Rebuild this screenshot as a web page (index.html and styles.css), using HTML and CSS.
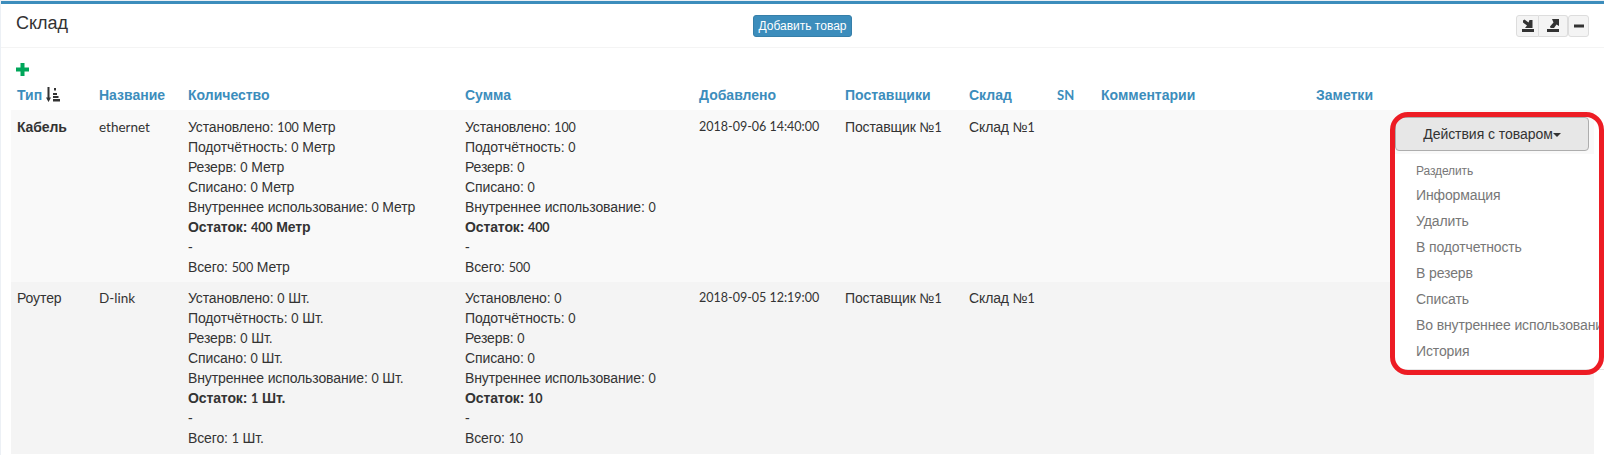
FILE: index.html
```html
<!DOCTYPE html>
<html lang="ru">
<head>
<meta charset="utf-8">
<title>Склад</title>
<link rel="stylesheet" href="styles.css">
</head>
<body>
<section class="box">
  <header class="box-header">
    <h3 class="box-title">Склад</h3>
    <button class="btn-add">Добавить товар</button>
    <div class="tools">
      <button class="tool tool-first"><svg width="14" height="14" viewBox="0 0 14 14"><path d="M1 10h12v3H1z" fill="#333"/><path d="M2 1.500l1.500-1 4 3 1-2.500h3v8H4l2-2.500-4-3z" fill="#333"/></svg></button>
      <button class="tool tool-mid"><svg width="14" height="14" viewBox="0 0 14 14"><path d="M1 10h12v3H1z" fill="#333"/><path d="M6 0h7v7l-2.500-1.500L8 9H4.500L4 7.500 7.500 3.500z" fill="#333"/></svg></button>
      <button class="tool tool-last"><svg width="10" height="10" viewBox="0 0 10 10"><path d="M0 3.500h10v3H0z" fill="#333"/></svg></button>
    </div>
  </header>
  <div class="box-body">
    <div class="plus-row"><svg width="13" height="13" viewBox="0 0 13 13"><path d="M4.500 0h4v4.500H13v4H8.500V13h-4V8.500H0v-4h4.500z" fill="#00a65a"/></svg></div>
    <table class="stock">
      <colgroup>
        <col class="c-type"><col class="c-name"><col class="c-qty"><col class="c-sum"><col class="c-date"><col class="c-sup"><col class="c-wh"><col class="c-sn"><col class="c-com"><col class="c-note"><col class="c-act">
      </colgroup>
      <thead>
        <tr>
          <th>Тип <svg class="sort" width="14" height="15" viewBox="0 0 14 15"><path d="M1.500 0h2v10.500H5L2.500 15 0 10.500h1.500z" fill="#333"/><path d="M8 1h2v2.500H8zM7 6h4v2H7zM7 9h5.500v2H7zM7 12h7v2.500H7z" fill="#333"/></svg></th>
          <th>Название</th><th>Количество</th><th>Сумма</th><th>Добавлено</th><th>Поставщики</th><th>Склад</th><th class="sn">SN</th><th>Комментарии</th><th>Заметки</th><th></th>
        </tr>
      </thead>
      <tbody>
        <tr class="odd">
          <td><b>Кабель</b></td>
          <td class="latin">ethernet</td>
          <td>Установлено: <span class="n">100</span> Метр<br>Подотчётность: <span class="n">0</span> Метр<br>Резерв: <span class="n">0</span> Метр<br>Списано: <span class="n">0</span> Метр<br>Внутреннее использование: <span class="n">0</span> Метр<br><b>Остаток: <span class="n">400</span> Метр</b><br>-<br>Всего: <span class="n">500</span> Метр</td>
          <td>Установлено: <span class="n">100</span><br>Подотчётность: <span class="n">0</span><br>Резерв: <span class="n">0</span><br>Списано: <span class="n">0</span><br>Внутреннее использование: <span class="n">0</span><br><b>Остаток: <span class="n">400</span></b><br>-<br>Всего: <span class="n">500</span></td>
          <td class="date">2018-09-06 14:40:00</td>
          <td>Поставщик №<span class="n">1</span></td>
          <td>Склад №<span class="n">1</span></td>
          <td></td><td></td><td></td>
          <td class="act">
            <div class="act-wrap">
              <button class="btn-act">Действия с товаром<span class="caret"></span></button>
              <ul class="menu">
                <li class="small">Разделить</li>
                <li>Информация</li>
                <li>Удалить</li>
                <li>В подотчетность</li>
                <li>В резерв</li>
                <li>Списать</li>
                <li>Во внутреннее использование</li>
                <li>История</li>
              </ul>
            </div>
          </td>
        </tr>
        <tr class="even">
          <td>Роутер</td>
          <td class="latin">D-link</td>
          <td>Установлено: <span class="n">0</span> Шт.<br>Подотчётность: <span class="n">0</span> Шт.<br>Резерв: <span class="n">0</span> Шт.<br>Списано: <span class="n">0</span> Шт.<br>Внутреннее использование: <span class="n">0</span> Шт.<br><b>Остаток: <span class="n">1</span> Шт.</b><br>-<br>Всего: <span class="n">1</span> Шт.</td>
          <td>Установлено: <span class="n">0</span><br>Подотчётность: <span class="n">0</span><br>Резерв: <span class="n">0</span><br>Списано: <span class="n">0</span><br>Внутреннее использование: <span class="n">0</span><br><b>Остаток: <span class="n">10</span></b><br>-<br>Всего: <span class="n">10</span></td>
          <td class="date">2018-09-05 12:19:00</td>
          <td>Поставщик №<span class="n">1</span></td>
          <td>Склад №<span class="n">1</span></td>
          <td></td><td></td><td></td><td></td>
        </tr>
      </tbody>
    </table>
  </div>
</section>
<div class="annotation"></div>
</body>
</html>
```

FILE: styles.css
```css
html, body {
  margin: 0;
  padding: 0;
  background: #ecf0f5;
  height: 455px;
  overflow: hidden;
}
body {
  font-family: "Liberation Sans", Arial, sans-serif;
  font-size: 14px;
  line-height: 20px;
  color: #333;
}
.box {
  margin: 1px 0 0 1px;
  background: #fff;
  border-top: 3px solid #3c8dbc;
  height: 451px;
  overflow: hidden;
}
.box-header {
  position: relative;
  display: flex;
  align-items: flex-start;
  justify-content: center;
  height: 43px;
  border-bottom: 1px solid #f4f4f4;
}
.box-title {
  position: absolute;
  left: 15px;
  top: 9px;
  margin: 0;
  font-size: 18px;
  font-weight: 400;
  line-height: 20px;
  color: #333;
}
.btn-add {
  margin: 11px 0 0 0;
  height: 22px;
  width: 99px;
  padding: 0;
  font: 12px/18px "Liberation Sans", sans-serif;
  color: #fff;
  background: #3c8dbc;
  border: 1px solid #367fa9;
  border-radius: 3px;
}
.tools {
  position: absolute;
  right: 15px;
  top: 11px;
  display: flex;
}
.tool {
  height: 22px;
  padding: 0;
  display: flex;
  align-items: center;
  justify-content: center;
  background: #f4f4f4;
  border: 1px solid #ddd;
}
.tool-first { width: 23px; border-radius: 3px 0 0 3px; }
.tool-mid { width: 29px; border-left: 0; border-radius: 0 3px 3px 0; }
.tool-last { width: 21px; border-radius: 3px; }
.box-body {
  padding: 15px 10px 0;
}
.plus-row {
  height: 13px;
  padding-left: 5px;
}
.plus-row svg { display: block; }
.stock {
  width: 1583px;
  margin-top: 3px;
  border-collapse: collapse;
  table-layout: fixed;
}
.c-type { width: 82px; }
.c-name { width: 89px; }
.c-qty { width: 277px; }
.c-sum { width: 234px; }
.c-date { width: 146px; }
.c-sup { width: 124px; }
.c-wh { width: 88px; }
.c-sn { width: 44px; }
.c-com { width: 215px; }
.c-note { width: 80px; }
.c-act { width: 204px; }
.stock th {
  padding: 6px 6px 5px;
  text-align: left;
  font-weight: 700;
  color: #3c8dbc;
  line-height: 20px;
  white-space: nowrap;
}
.stock th.sn { font-family: Lato, sans-serif; font-size: 13px; }
.sort { vertical-align: -2px; }
.stock td {
  vertical-align: top;
  line-height: 20px;
  font-size: 14px;
  letter-spacing: -0.12px;
  white-space: nowrap;
}
.n { font-family: Lato, sans-serif; font-size: 12.500px; line-height: 1; }
.stock td.date { font-family: Lato, sans-serif; font-size: 12.500px; letter-spacing: 0; }
.stock td.latin { font-family: Lato, sans-serif; font-size: 13.500px; letter-spacing: 0; }
.odd { background: #f9f9f9; }
.odd td { padding: 7px 6px 5px; }
.even { background: #f4f4f4; }
.even td { padding: 6px 6px 6px; }
.act { position: relative; }
.act-wrap {
  position: absolute;
  left: 5px;
  top: 7px;
  width: 214px;
}
.btn-act {
  display: block;
  width: 194px;
  height: 34px;
  padding: 0;
  font: 14px/20px "Liberation Sans", sans-serif;
  letter-spacing: -0.05px;
  color: #333;
  background: #e7e7e7;
  border: 1px solid #adadad;
  border-radius: 4px;
}
.caret {
  display: inline-block;
  vertical-align: middle;
  width: 0;
  height: 0;
  border-top: 4px solid #333;
  border-left: 4px solid transparent;
  border-right: 4px solid transparent;
}
.menu {
  list-style: none;
  margin: 3px 0 0;
  padding: 5px 0;
  width: 214px;
  height: 216px;
  box-sizing: border-box;
  background: #fff;
  overflow: hidden;
  border-bottom: 1px solid #e6e6e6;
}
.menu li {
  padding: 3px 0 3px 21px;
  line-height: 20px;
  color: #777;
  white-space: nowrap;
}
.menu li.small { font-size: 12px; padding: 2px 0 1px 21px; }
.annotation {
  position: absolute;
  left: 1390px;
  top: 112px;
  width: 214px;
  height: 263px;
  box-sizing: border-box;
  border: 5px solid #ed1c24;
  border-radius: 18px;
}
```
